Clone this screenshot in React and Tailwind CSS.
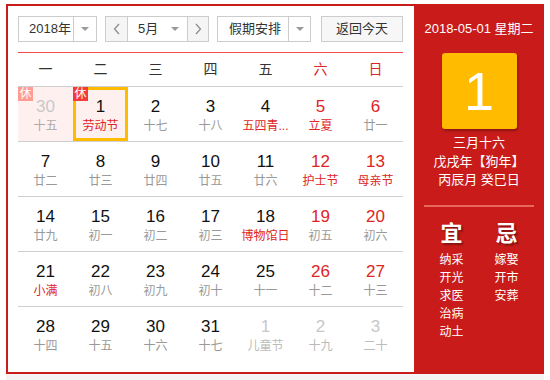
import React from "react";

const RED = "text-[#e02424]";

const rows = [
  [
    { d: "30", l: "十五", other: true, rest: "faded", bg: true },
    { d: "1", l: "劳动节", lr: true, rest: "on", sel: true },
    { d: "2", l: "十七" },
    { d: "3", l: "十八" },
    { d: "4", l: "五四青...", lr: true },
    { d: "5", l: "立夏", dr: true, lr: true },
    { d: "6", l: "廿一", dr: true },
  ],
  [
    { d: "7", l: "廿二" },
    { d: "8", l: "廿三" },
    { d: "9", l: "廿四" },
    { d: "10", l: "廿五" },
    { d: "11", l: "廿六" },
    { d: "12", l: "护士节", dr: true, lr: true },
    { d: "13", l: "母亲节", dr: true, lr: true },
  ],
  [
    { d: "14", l: "廿九" },
    { d: "15", l: "初一" },
    { d: "16", l: "初二" },
    { d: "17", l: "初三" },
    { d: "18", l: "博物馆日", lr: true },
    { d: "19", l: "初五", dr: true },
    { d: "20", l: "初六", dr: true },
  ],
  [
    { d: "21", l: "小满", lr: true },
    { d: "22", l: "初八" },
    { d: "23", l: "初九" },
    { d: "24", l: "初十" },
    { d: "25", l: "十一" },
    { d: "26", l: "十二", dr: true },
    { d: "27", l: "十三", dr: true },
  ],
  [
    { d: "28", l: "十四" },
    { d: "29", l: "十五" },
    { d: "30", l: "十六" },
    { d: "31", l: "十七" },
    { d: "1", l: "儿童节", other: true },
    { d: "2", l: "十九", other: true },
    { d: "3", l: "二十", other: true },
  ],
];

function Tri() {
  return (
    <span className="w-0 h-0 border-x-[4px] border-x-transparent border-t-[4px] border-t-[#999]" />
  );
}

function Chev({ dir }) {
  return (
    <svg width="8" height="12" viewBox="0 0 8 12">
      <polyline
        points={dir === "l" ? "6,1 1.5,6 6,11" : "2,1 6.5,6 2,11"}
        fill="none"
        stroke="#888"
        strokeWidth="1.2"
      />
    </svg>
  );
}

function Cell({ c }) {
  let numColor = "text-[#111]";
  if (c.other) numColor = "text-[#c8c8c8]";
  else if (c.dr) numColor = RED;
  let lunColor = "text-[#999]";
  if (c.other) lunColor = c.bg ? "text-[#aaa]" : "text-[#bbb]";
  else if (c.lr) lunColor = RED;
  return (
    <div
      className={`relative flex flex-col items-center pt-[10px] ${
        c.bg || c.sel ? "bg-[#fff0f0]" : ""
      }`}
    >
      {c.sel && (
        <div className="absolute left-0 top-0 w-[55px] h-[54px] border-[3px] border-[#ffbb00]" />
      )}
      {c.rest && (
        <div
          className={`absolute left-0 top-0 w-[15px] h-[14px] flex items-center justify-center text-[12px] leading-none text-white ${
            c.rest === "on" ? "bg-[#f53a3a]" : "bg-[#ff9c94]"
          }`}
        >
          休
        </div>
      )}
      <div className={`relative text-[17px] leading-[20px] ${numColor}`}>{c.d}</div>
      <div className={`relative mt-[1px] text-[12px] leading-[16px] whitespace-nowrap ${lunColor}`}>
        {c.l}
      </div>
    </div>
  );
}

export default function App() {
  const week = ["一", "二", "三", "四", "五", "六", "日"];
  return (
    <div className="w-[550px] h-[380px] bg-white font-['Liberation_Sans','Noto_Sans_CJK_SC',sans-serif] pt-[4px] pl-[6px]">
      <div className="flex w-[538px] h-[370px]">
        {/* left */}
        <div className="w-[408px] h-[370px] border-2 border-r-0 border-[#c91c1a] bg-white pl-[10px] pr-[3px] pt-[10px]">
          {/* toolbar */}
          <div className="flex h-[26px] text-[13px] text-[#333]">
            <div className="flex w-[79px] h-[26px] border border-[#ccc] bg-white">
              <div className="w-[55px] flex items-center pl-[10px] border-r border-[#ccc]">2018年</div>
              <div className="flex-1 flex items-center justify-center">
                <Tri />
              </div>
            </div>
            <div className="ml-[8px] flex w-[104px] h-[26px] border border-[#ccc]">
              <div className="w-[22px] flex items-center justify-center bg-[#f5f5f5] border-r border-[#ccc]">
                <Chev dir="l" />
              </div>
              <div className="w-[60px] flex items-center justify-between pl-[10px] pr-[8px] bg-white border-r border-[#ccc]">
                <span>5月</span>
                <Tri />
              </div>
              <div className="flex-1 flex items-center justify-center bg-[#f5f5f5]">
                <Chev dir="r" />
              </div>
            </div>
            <div className="ml-[8px] flex w-[94px] h-[26px] border border-[#ccc] bg-white">
              <div className="w-[71px] flex items-center pl-[11px] border-r border-[#ccc]">假期安排</div>
              <div className="flex-1 flex items-center justify-center">
                <Tri />
              </div>
            </div>
            <div className="ml-[10px] w-[82px] h-[26px] border border-[#ccc] bg-[#f7f7f7] flex items-center justify-center">
              返回今天
            </div>
          </div>
          <div className="mt-[10px] w-[385px] h-px bg-[#f24b48]" />
          {/* weekday header */}
          <div className="grid grid-cols-[repeat(7,55px)] h-[34px] border-b border-[#cfcfcf] text-[14px] w-[385px]">
            {week.map((w, i) => (
              <div
                key={w}
                className={`flex items-center justify-center ${i >= 5 ? "text-[#e02424]" : "text-[#333]"}`}
              >
                {w}
              </div>
            ))}
          </div>
          {rows.map((r, ri) => (
            <div
              key={ri}
              className={`grid grid-cols-[repeat(7,55px)] h-[55px] w-[385px] ${
                ri < 4 ? "border-b border-[#cfcfcf]" : ""
              }`}
            >
              {r.map((c, ci) => (
                <Cell key={ci} c={c} />
              ))}
            </div>
          ))}
        </div>
        {/* right */}
        <div className="w-[130px] h-[370px] bg-[#c91c1a] flex flex-col items-center text-white pt-[16px]">
          <div className="text-[13px] leading-[18px] whitespace-nowrap">2018-05-01 星期二</div>
          <div className="mt-[15px] w-[75px] h-[76px] bg-[#ffbb00] rounded-[3px] shadow-[1px_2px_3px_rgba(0,0,0,0.3)] flex items-center justify-center text-[54px] leading-none">
            1
          </div>
          <div className="mt-[5px] text-[13px] leading-[18.5px] flex flex-col items-center">
            <div>三月十六</div>
            <div className="whitespace-nowrap">戊戌年【狗年】</div>
            <div className="whitespace-nowrap">丙辰月 癸巳日</div>
          </div>
          <div className="mt-[15px] w-[110px] h-[2px] bg-[#e8675e]" />
          <div className="mt-[15px] w-[110px] grid grid-cols-2">
            <div className="flex flex-col items-center">
              <div className="text-[22px] leading-[24px] font-bold [text-shadow:2px_2px_2px_rgba(0,0,0,0.35)]">宜</div>
              <div className="mt-[5px] text-[12px] leading-[18px] flex flex-col items-center">
                <div>纳采</div>
                <div>开光</div>
                <div>求医</div>
                <div>治病</div>
                <div>动土</div>
              </div>
            </div>
            <div className="flex flex-col items-center">
              <div className="text-[22px] leading-[24px] font-bold [text-shadow:2px_2px_2px_rgba(0,0,0,0.35)]">忌</div>
              <div className="mt-[5px] text-[12px] leading-[18px] flex flex-col items-center">
                <div>嫁娶</div>
                <div>开市</div>
                <div>安葬</div>
              </div>
            </div>
          </div>
        </div>
      </div>
      <div className="w-[538px] h-[6px] bg-[#f4f4f4]" />
    </div>
  );
}
